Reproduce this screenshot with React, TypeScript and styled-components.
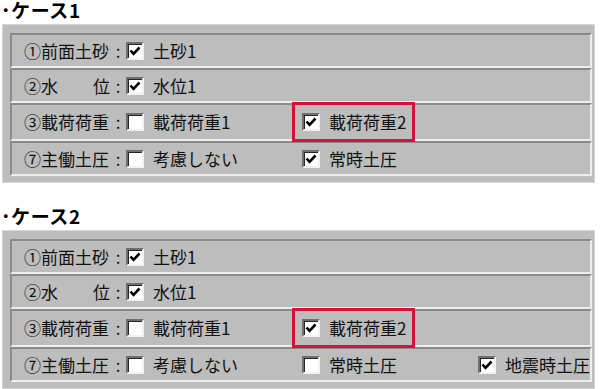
import styled, { createGlobalStyle } from 'styled-components';

const GlobalStyle = createGlobalStyle`
  html, body {
    margin: 0;
    padding: 0;
    background: #ffffff;
  }
  body {
    font-family: "Noto Sans CJK JP", "Liberation Sans", sans-serif;
    color: #111111;
  }
`

type Option = { text: string; checked?: boolean; highlight?: boolean }
type Row = { label: string[]; tall?: boolean; options: Option[] }
type Case = { title: string; rows: Row[] }

// label parts are spread over the label width (水　　位)
const cases: Case[] = [
  {
    title: 'ケース1',
    rows: [
      { label: ['①前面土砂'], options: [{ text: '土砂1', checked: true }] },
      { label: ['②水', '位'], options: [{ text: '水位1', checked: true }] },
      {
        label: ['③載荷荷重'],
        tall: true,
        options: [
          { text: '載荷荷重1' },
          { text: '載荷荷重2', checked: true, highlight: true },
        ],
      },
      {
        label: ['⑦主働土圧'],
        options: [{ text: '考慮しない' }, { text: '常時土圧', checked: true }],
      },
    ],
  },
  {
    title: 'ケース2',
    rows: [
      { label: ['①前面土砂'], options: [{ text: '土砂1', checked: true }] },
      { label: ['②水', '位'], options: [{ text: '水位1', checked: true }] },
      {
        label: ['③載荷荷重'],
        tall: true,
        options: [
          { text: '載荷荷重1' },
          { text: '載荷荷重2', checked: true, highlight: true },
        ],
      },
      {
        label: ['⑦主働土圧'],
        options: [
          { text: '考慮しない' },
          { text: '常時土圧' },
          { text: '地震時土圧', checked: true },
        ],
      },
    ],
  },
]

const Page = styled.div`
  width: 600px;
  display: flex;
  flex-direction: column;
`

const Section = styled.section`
  display: flex;
  flex-direction: column;

  & + & {
    margin-top: 23px;
  }
`

const Title = styled.h2`
  margin: 0 0 4px;
  padding-left: 1px;
  font-size: 19px;
  line-height: 20px;
  font-weight: 700;
  color: #000;
  letter-spacing: 0.6px;
  white-space: nowrap;
`

const Panel = styled.div`
  margin-left: 2px;
  width: 593px;
  box-sizing: border-box;
  padding: 8px 2px 6px 7px;
  background: #bdbdbd;
  border: 1px solid #d6d6d6;
  display: flex;
  flex-direction: column;
`

const RowBox = styled.div<{ $tall?: boolean }>`
  box-sizing: border-box;
  height: ${p => (p.$tall ? 38 : 35)}px;
  border-top: 2px solid #8a8a8a;
  border-left: 2px solid #8a8a8a;
  border-bottom: 2px solid #eeeeee;
  border-right: 2px solid #eeeeee;
  padding-left: 12px;
  display: flex;
  align-items: center;
  font-size: 17px;
  line-height: 20px;
`

const Label = styled.span`
  flex: none;
  width: 86px;
  display: flex;
  justify-content: space-between;
  white-space: nowrap;
`

const Colon = styled.span`
  flex: none;
  width: 16px;
  text-align: center;
`

const Options = styled.div`
  flex: 1;
  display: grid;
  grid-template-columns: 176px 176px auto;
  align-items: center;
`

const OptionItem = styled.label<{ $highlight?: boolean }>`
  position: relative;
  display: flex;
  align-items: center;
  gap: 9px;
  white-space: nowrap;

  ${p =>
    p.$highlight &&
    `
    &::after {
      content: '';
      position: absolute;
      left: -10px;
      top: -10px;
      bottom: -10px;
      width: 123px;
      border: 3px solid #d2143c;
      box-sizing: border-box;
    }
  `}
`

const Box = styled.span`
  box-sizing: border-box;
  width: 18px;
  height: 18px;
  flex: none;
  background: #ffffff;
  border-top: 2px solid #6f6f6f;
  border-left: 2px solid #6f6f6f;
  border-bottom: 2px solid #f2f2f2;
  border-right: 2px solid #f2f2f2;
  box-shadow: inset 1px 1px 0 #262626;
  display: flex;
  align-items: center;
  justify-content: center;
`

function Check({ checked }: { checked?: boolean }) {
  return (
    <Box>
      {checked && (
        <svg width="12" height="12" viewBox="0 0 12 12">
          <path d="M1.5 5.5 L4.5 8.8 L10.5 2.5" fill="none" stroke="#000" strokeWidth="2.6" />
        </svg>
      )}
    </Box>
  )
}

function App() {
  return (
    <Page>
      <GlobalStyle />
      {cases.map(c => (
        <Section key={c.title}>
          <Title>･{c.title}</Title>
          <Panel>
            {c.rows.map(r => (
              <RowBox key={r.label.join('')} $tall={r.tall}>
                <Label>
                  {r.label.map(part => (
                    <span key={part}>{part}</span>
                  ))}
                </Label>
                <Colon>:</Colon>
                <Options>
                  {r.options.map(o => (
                    <OptionItem key={o.text} $highlight={o.highlight}>
                      <Check checked={o.checked} />
                      <span>{o.text}</span>
                    </OptionItem>
                  ))}
                </Options>
              </RowBox>
            ))}
          </Panel>
        </Section>
      ))}
    </Page>
  );
}

export default App;
